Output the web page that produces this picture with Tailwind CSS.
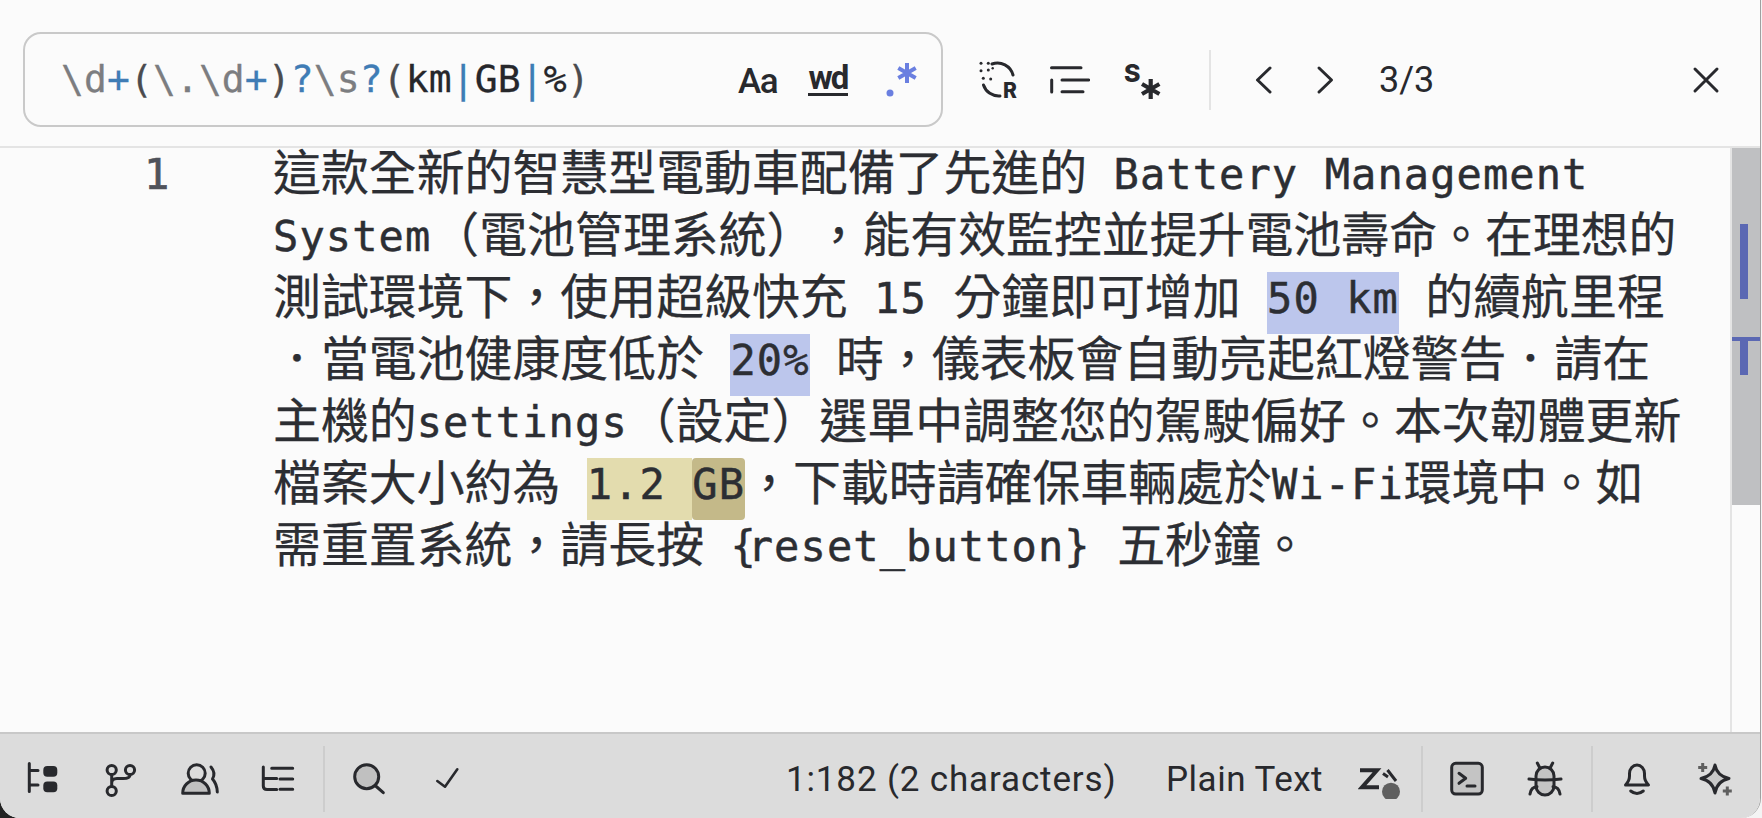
<!DOCTYPE html>
<html lang="zh-Hant">
<head>
<meta charset="utf-8">
<title>Regex search</title>
<script src="https://cdn.jsdelivr.net/npm/@tailwindcss/browser@4"></script>
</head>
<body class="overflow-hidden">
<div class="w-[1762px] h-[818px] bg-[linear-gradient(90deg,#222_50%,#f4f4f4_50%)]">
  <div class="w-[1761px] h-[818px] flex flex-col overflow-hidden rounded-b-[20px] border-r border-[#a0a0a0] bg-[#fbfbfb] text-[#28292d]">

    <!-- Search toolbar -->
    <div class="h-[148px] shrink-0 flex items-center pt-[13px] pl-[23px] border-b-2 border-[#e4e4e4] font-['Roboto']">
      <div class="w-[920px] h-[95px] shrink-0 flex items-center pl-[36px] rounded-[18px] border-2 border-[#c9c9c9]">
        <div class="w-[527px] shrink-0 whitespace-pre font-['DejaVu_Sans_Mono'] text-[38px] tracking-[0.1px] [-webkit-text-stroke:0.3px] text-[#7c7d80]">\d<span class="text-[#3f7cb5]">+</span><span class="text-[#4a4b4f]">(</span>\.\d<span class="text-[#3f7cb5]">+</span><span class="text-[#4a4b4f]">)</span><span class="text-[#3f7cb5]">?</span>\s<span class="text-[#3f7cb5]">?</span><span class="text-[#4a4b4f]">(</span><span class="text-[#26272b]">km</span><span class="text-[#3f7cb5]">|</span><span class="text-[#26272b]">GB</span><span class="text-[#3f7cb5]">|</span><span class="text-[#26272b]">%</span><span class="text-[#4a4b4f]">)</span></div>
        <span class="ml-[150px] w-[37px] mt-[3px] text-[35px] leading-none font-medium tracking-[-1.5px]">Aa</span>
        <span class="ml-[33px] w-[40px] -mt-[1px] text-[33px] leading-[31px] font-bold tracking-[-2px] border-b-[3px] border-[#28292d] text-center">wd</span>
        <svg class="ml-[32px] w-[40px] h-[40px] shrink-0" viewBox="0 0 40 40" fill="none" stroke="#6a7fe0" stroke-width="4"><circle cx="10" cy="33" r="3.5" fill="#6a7fe0" stroke="none"/><path d="M27 3V23M18.3 8L35.7 18M18.3 18L35.7 8"/></svg>
      </div>

      <svg class="ml-[35px] w-[40px] h-[40px] shrink-0" viewBox="0 0 40 40" fill="none" stroke="#28292d" stroke-width="3" stroke-linecap="round"><path d="M14 4A16 16 0 0 1 35 15M5.5 25A16 16 0 0 0 22 36"/><g fill="#28292d" stroke="none"><circle cx="3" cy="3.3" r="1.5"/><circle cx="10.3" cy="3.3" r="1.5"/><circle cx="3" cy="10.7" r="1.5"/><circle cx="10.3" cy="10" r="1.5"/><circle cx="14.7" cy="8.3" r="1.2"/><circle cx="5.3" cy="18.3" r="1.5"/><circle cx="12.7" cy="19" r="1.5"/><text x="25" y="38" font-family="Inter" font-weight="800" font-size="21">R</text></g></svg>
      <svg class="ml-[32px] w-[40px] h-[40px] shrink-0" viewBox="0 0 40 40" fill="none" stroke="#28292d" stroke-width="3" stroke-linecap="round"><path d="M1.5 7.7H31M1.7 20V32M12 20H38.8M12 31.7H33"/></svg>
      <svg class="ml-[34px] w-[40px] h-[40px] shrink-0" viewBox="0 0 40 40" fill="none" stroke="#28292d" stroke-width="4.2"><text x="0" y="22" font-family="Inter" font-weight="800" font-size="25" fill="#28292d" stroke="none">S</text><path d="M26.7 19V39M18 24L35.4 34M18 34L35.4 24"/></svg>
      <div class="ml-[45px] w-[2px] h-[60px] bg-[#e4e4e4] shrink-0"></div>
      <svg class="ml-[43px] w-[20px] h-[30px] shrink-0" viewBox="0 0 20 30" fill="none" stroke="#28292d" stroke-width="3" stroke-linecap="round" stroke-linejoin="round"><path d="M16 3L3.5 15L16 27"/></svg>
      <svg class="ml-[41px] w-[20px] h-[30px] shrink-0" viewBox="0 0 20 30" fill="none" stroke="#28292d" stroke-width="3" stroke-linecap="round" stroke-linejoin="round"><path d="M4 3L16.5 15L4 27"/></svg>
      <span class="ml-[44px] w-[53px] mt-[1px] shrink-0 text-[36px] leading-none whitespace-nowrap">3/3</span>
      <svg class="ml-[260px] w-[28px] h-[28px] shrink-0" viewBox="0 0 28 28" fill="none" stroke="#28292d" stroke-width="3" stroke-linecap="round"><path d="M3 3L25 25M25 3L3 25"/></svg>
    </div>

    <!-- Editor -->
    <div class="flex-1 flex min-h-0">
      <div class="w-[273px] shrink-0 pl-[144px] font-['DejaVu_Sans_Mono'] text-[42px] leading-[54px] [-webkit-text-stroke:0.7px] text-[#4f525a]">1</div>
      <div class="flex-1 font-['Noto_Sans_CJK_TC'] text-[47.9px] leading-[42px] [text-spacing-trim:space-all] [-webkit-text-stroke:0.25px] [&_code]:font-['DejaVu_Sans_Mono'] [&_code]:text-[42px] [&_code]:tracking-[1.1px] [&_code]:leading-[53px] [&_code]:[-webkit-text-stroke:0.5px] [&>div]:flex [&>div]:h-[62px] [&>div]:whitespace-pre text-[#2c2e33]">
        <div>這款全新的智慧型電動車配備了先進的<code> Battery Management</code></div>
        <div><code>System</code>（電池管理系統），能有效監控並提升電池壽命。在理想的</div>
        <div>測試環境下，使用超級快充<code> 15 </code>分鐘即可增加<code> </code><code class="bg-[#bcc6ec]">50 km</code><code> </code>的續航里程</div>
        <div>．當電池健康度低於<code> </code><code class="bg-[#bcc6ec]">20%</code><code> </code>時，儀表板會自動亮起紅燈警告．請在</div>
        <div>主機的<code>settings</code>（設定）選單中調整您的駕駛偏好。本次韌體更新</div>
        <div>檔案大小約為<code> </code><code class="bg-[#e3dcae]">1.2 </code><code class="bg-[#c4b989] rounded-[4px]">GB</code>，下載時請確保車輛處於<code>Wi-Fi</code>環境中。如</div>
        <div>需重置系統，請長按<code> <span class="tracking-[-8px]">{</span>reset_button} </code>五秒鐘。</div>
      </div>
      <div class="w-[30px] shrink-0 border-l-2 border-[#e4e4e4]">
        <div class="relative h-[357px] bg-[#bfc0c2]">
          <div class="absolute left-[8px] top-[76px] w-[8px] h-[75px] bg-[#5b68b3]"></div>
          <div class="absolute left-0 right-0 top-[189px] h-[4px] bg-[#5b68b3]"></div>
          <div class="absolute left-[8px] top-[193px] w-[8px] h-[34px] bg-[#5b68b3]"></div>
        </div>
      </div>
    </div>

    <!-- Status bar -->
    <div class="h-[86px] shrink-0 pt-[12px] border-t-2 border-[#c8c8c8] bg-[#dcdcdc]">
      <div class="h-[66px] flex items-center pl-[23px]">
        <svg class="w-[40px] h-[40px] shrink-0" viewBox="0 0 40 40" fill="none" stroke="#28292d" stroke-width="3" stroke-linecap="round"><path d="M6.3 4.5V32.5M6.3 11.5H15M6.3 26H15"/><rect x="20.3" y="7" width="14" height="10.7" rx="4" fill="#28292d" stroke="none"/><rect x="20.3" y="22.5" width="14" height="10.7" rx="4" fill="#28292d" stroke="none"/></svg>
        <svg class="ml-[38px] w-[40px] h-[40px] shrink-0" viewBox="0 0 40 40" fill="none" stroke="#28292d" stroke-width="3" stroke-linecap="round"><circle cx="10.7" cy="11" r="4.6"/><circle cx="29" cy="11" r="4.6"/><circle cx="10.7" cy="32" r="4.6"/><path d="M10.7 16V27M10.7 24Q10.7 19.5 16 19.5H22Q29 19.5 29 16"/></svg>
        <svg class="ml-[39px] w-[40px] h-[40px] shrink-0" viewBox="0 0 40 40" fill="none" stroke="#28292d" stroke-width="3" stroke-linecap="round" stroke-linejoin="round"><circle cx="16.7" cy="14.3" r="8.5"/><path d="M2.7 34.3A13.3 13.3 0 0 1 29.3 34.3Z" fill="#c0c0c0"/><path d="M31 8Q36 14 32.5 20Q37 25 37.3 33"/></svg>
        <svg class="ml-[38px] w-[40px] h-[40px] shrink-0" viewBox="0 0 40 40" fill="none" stroke="#28292d" stroke-width="3" stroke-linecap="round"><path d="M5.3 8V27Q5.3 30.5 9 30.5H18.7M5.3 19.5H18.7M13.7 9.3H34.7M22 20H34.7M22 30.3H34.7"/></svg>
        <div class="ml-[25px] w-[2px] h-[66px] shrink-0 bg-[#cdcdcd]"></div>
        <svg class="ml-[24px] w-[40px] h-[40px] shrink-0" viewBox="0 0 40 40" fill="none" stroke="#28292d" stroke-width="3" stroke-linecap="round"><circle cx="17.7" cy="17.7" r="12" fill="#c0c0c0"/><path d="M26.7 27L34.3 33.7"/></svg>
        <svg class="ml-[39px] w-[40px] h-[40px] shrink-0" viewBox="0 0 40 40" fill="none" stroke="#28292d" stroke-width="2.6" stroke-linecap="round" stroke-linejoin="round"><path d="M9.3 22L17 27.7L29.3 10.3"/></svg>
        <span class="ml-[318px] w-[328px] shrink-0 whitespace-nowrap font-['Roboto'] text-[35px] tracking-[0.85px] leading-none">1:182 (2 characters)</span>
        <span class="ml-[52px] w-[156px] shrink-0 whitespace-nowrap font-['Roboto'] text-[35px] tracking-[0.5px] leading-none">Plain Text</span>
        <svg class="ml-[36px] w-[44px] h-[40px] shrink-0" viewBox="0 0 44 40" fill="none" stroke="#28292d" stroke-width="4"><path d="M2 11.3H19L4 28.3H21"/><path d="M25 14.5L30 18M29.5 11L38 22" stroke-width="3"/><circle cx="33" cy="32.7" r="9" fill="#5f5f5f" stroke="none"/></svg>
        <div class="ml-[19px] w-[2px] h-[66px] shrink-0 bg-[#cdcdcd]"></div>
        <svg class="ml-[24px] w-[40px] h-[40px] shrink-0" viewBox="0 0 40 40" fill="none" stroke="#28292d" stroke-width="3" stroke-linecap="round" stroke-linejoin="round"><rect x="4.7" y="4.3" width="30.6" height="30.7" rx="4" fill="#c4c4c4"/><path d="M12 14.3L18.7 19.3L12 24.3M20 27H28"/></svg>
        <svg class="ml-[38px] w-[40px] h-[40px] shrink-0" viewBox="0 0 40 40" fill="none" stroke="#28292d" stroke-width="3" stroke-linecap="round" stroke-linejoin="round"><path d="M11 17A9 9 0 0 1 29 17V27A9 9 0 0 1 11 27Z" fill="#c4c4c4"/><path d="M12.3 4L15 9.3M27.7 4L25 9.3M4 20Q20 22 36 20M5 35Q6 28 12 27.7M35 35Q34 28 28 27.7"/></svg>
        <div class="ml-[26px] w-[2px] h-[66px] shrink-0 bg-[#cdcdcd]"></div>
        <svg class="ml-[24px] w-[40px] h-[40px] shrink-0" viewBox="0 0 40 40" fill="none" stroke="#28292d" stroke-width="3" stroke-linecap="round" stroke-linejoin="round"><path d="M8.5 26Q12.5 22 12.5 17V14.5A7.5 8.5 0 0 1 27.5 14.5V17Q27.5 22 31.5 26Z"/><path d="M13.7 32Q20 37 26.3 32"/></svg>
        <svg class="ml-[39px] w-[40px] h-[40px] shrink-0" viewBox="0 0 40 40" fill="none" stroke="#28292d" stroke-width="3" stroke-linejoin="round"><path d="M19 6Q21 17 33 19.5Q21 22 19 34Q17 22 5 19.5Q17 17 19 6Z" fill="#c8c8c8"/><path d="M6.7 4V13M2.2 8.4H11.2M31.3 27.5V36.5M26.8 32H35.8" stroke="#5f5f5f"/></svg>
      </div>
    </div>
  </div>
</div>
</body>
</html>
